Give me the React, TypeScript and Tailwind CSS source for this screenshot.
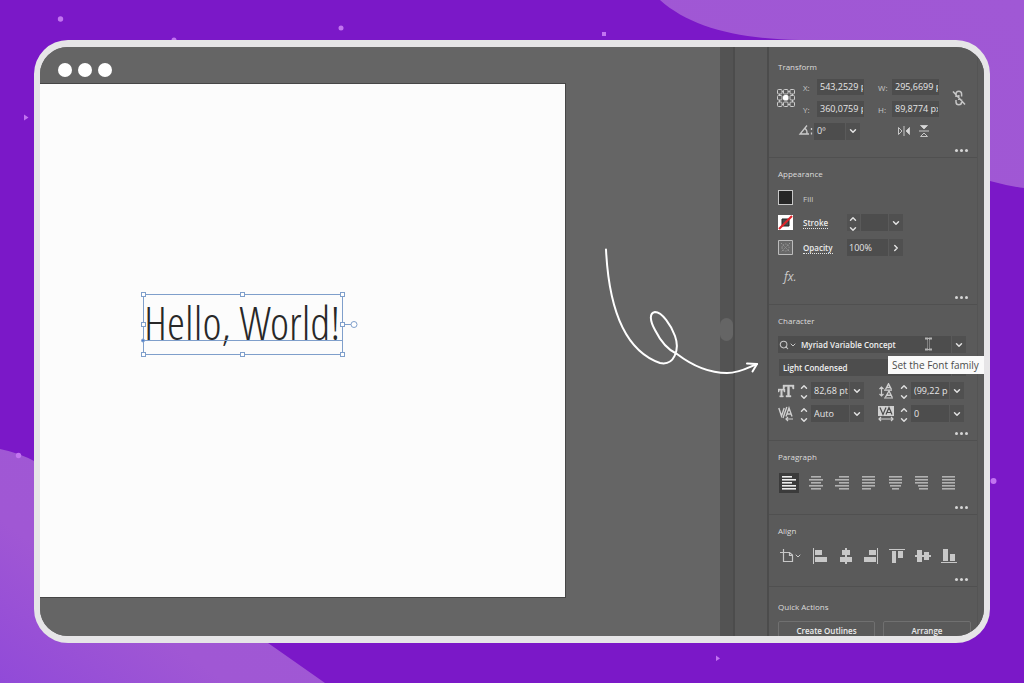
import type { ReactNode } from 'react';
import { ChevronDown, ChevronRight, ChevronUp, Search } from 'lucide-react';

function Section({ title, first, children }: { title: string; first?: boolean; children: ReactNode }) {
  return (
    <section className={`shrink-0 border-b border-[#505050] pb-[5px] pl-[9px] pr-[6px] ${first ? 'pt-[14px]' : 'pt-[10px]'}`}>
      <h2 className="text-[8px] font-medium leading-[12px] text-[#dcdcdc]">{title}</h2>
      {children}
    </section>
  );
}

function More({ label }: { label: string }) {
  return (
    <button type="button" aria-label={label} className="ml-auto mr-[3px] flex h-[4px] items-center gap-[2px]">
      <span className="size-[3px] rounded-full bg-[#d6d6d6]" />
      <span className="size-[3px] rounded-full bg-[#d6d6d6]" />
      <span className="size-[3px] rounded-full bg-[#d6d6d6]" />
    </button>
  );
}

function Field({ label, value, className }: { label: string; value: string; className: string }) {
  return (
    <input
      aria-label={label}
      defaultValue={value}
      className={`block h-[17px] min-w-0 bg-[#4d4d4d] text-[9px] font-medium leading-[16px] text-[#e6e6e6] outline-none ${className}`}
    />
  );
}

function Labelled({ name, id, value }: { name: string; id: string; value: string }) {
  return (
    <div className="flex h-[16px] items-center">
      <label htmlFor={id} className="w-[15px] pl-[1px] pt-[2px] text-[8px] font-medium leading-[12px] text-[#c6c6c6]">{name}</label>
      <input
        id={id}
        defaultValue={value}
        className="h-[16px] w-[47px] border-r border-[#4d4d4d] bg-[#4d4d4d] pl-[3px] text-[9px] font-medium leading-[16px] text-[#e6e6e6] outline-none"
      />
    </div>
  );
}

function Drop({ label, value, className, bold }: { label: string; value: string; className: string; bold?: boolean }) {
  return (
    <div className={`relative flex h-[17px] ${className}`}>
      <select
        aria-label={label}
        className={`w-full appearance-none bg-[#4d4d4d] pr-[16px] leading-[16px] outline-none ${bold ? 'pl-[4px] text-[8px] font-semibold text-[#f0f0f0]' : 'pl-[3px] text-[9px] font-medium text-[#e6e6e6]'}`}
      >
        <option>{value}</option>
      </select>
      <span className="pointer-events-none absolute inset-y-0 right-0 flex w-[15px] items-center justify-center border-l border-[#5a5a5a] bg-[#505050]">
        <ChevronDown size={10} strokeWidth={3.5} className="text-[#e2e2e2]" />
      </span>
    </div>
  );
}

function Stepper({ label }: { label: string }) {
  return (
    <div className="flex h-[17px] w-[11px] flex-col items-center justify-between">
      <button type="button" aria-label={`Increase ${label}`}><ChevronUp size={10} strokeWidth={3.5} className="block text-[#dedede]" /></button>
      <button type="button" aria-label={`Decrease ${label}`}><ChevronDown size={10} strokeWidth={3.5} className="block text-[#dedede]" /></button>
    </div>
  );
}

function CharCell({ icon, label, value }: { icon: ReactNode; label: string; value: string }) {
  return (
    <div className="flex items-center">
      {icon}
      <div className="ml-[3px] mr-[2px]"><Stepper label={label} /></div>
      <Drop label={label} value={value} className="w-[53px]" />
    </div>
  );
}

function LinkedLabel({ children }: { children: ReactNode }) {
  return (
    <div className="flex w-[54px] pl-[10px] pt-[2px]">
      <button type="button" className="border-b border-dotted border-[#e6e6e6] text-[8px] font-semibold leading-[10px] text-[#ececec]">{children}</button>
    </div>
  );
}

function ReferencePoint() {
  const spots = [0, 7, 14];
  return (
    <svg width="18" height="18" viewBox="0 0 18 18" fill="none" stroke="#cccccc" className="-ml-px mt-[10px] shrink-0">
      <path d="M2.500 2.500H15.500V15.500H2.500Z" />
      {spots.map((y) =>
        spots.map((x) => (
          <rect key={`${x}-${y}`} x={x === 0 ? 0.5 : x === 7 ? 6.5 : 13} y={y === 0 ? 0.5 : y === 7 ? 6.5 : 13} width="4.500" height="4.500" rx="1" fill={x === 7 && y === 7 ? '#fff' : '#5a5a5a'} stroke={x === 7 && y === 7 ? '#fff' : '#cccccc'} />
        )),
      )}
    </svg>
  );
}

const paragraphIcons: { label: string; lines: [number, number][] }[] = [
  { label: 'Align left', lines: [[0, 10], [0, 14], [0, 10], [0, 14], [0, 14]] },
  { label: 'Align center', lines: [[2, 10], [0, 14], [2, 10], [0, 14], [2, 10]] },
  { label: 'Align right', lines: [[4, 10], [0, 14], [4, 10], [0, 14], [4, 10]] },
  { label: 'Justify with last line left', lines: [[0, 13], [0, 13], [0, 13], [0, 13], [0, 9]] },
  { label: 'Justify with last line centered', lines: [[0, 13], [0, 13], [0, 13], [1, 11], [3, 7]] },
  { label: 'Justify with last line right', lines: [[0, 13], [0, 13], [0, 13], [3, 10], [4, 9]] },
  { label: 'Justify all lines', lines: [[0, 13], [0, 13], [0, 13], [0, 13], [0, 13]] },
];

const alignIcons: { label: string; d: string }[] = [
  { label: 'Align left edges', d: 'M1 0H2V16H1ZM3 2H10V7H3ZM3 9H15V14H3Z' },
  { label: 'Align horizontal centers', d: 'M7 0H9V2H12V7H9V9H14V14H9V16H7V14H2V9H7V7H4V2H7Z' },
  { label: 'Align right edges', d: 'M14 0H15V16H14ZM6 2H13V7H6ZM1 9H13V14H1Z' },
  { label: 'Align top edges', d: 'M0 1H16V2H0ZM3 3H7V15H3ZM9 3H14V10H9Z' },
  { label: 'Align vertical centers', d: 'M0 7H2V2H7V7H9V4H14V7H16V9H14V12H9V9H7V14H2V9H0Z' },
  { label: 'Align bottom edges', d: 'M0 14H16V15H0ZM2 1H7V13H2ZM9 6H14V13H9Z' },
];

function PropertiesPanel() {
  return (
    <aside className="flex w-[215px] shrink-0 overflow-hidden bg-[#5a5a5a]">
      <div className="flex min-w-0 flex-1 flex-col">
        <Section title="Transform" first>
          <div className="mt-[6px] flex">
            <ReferencePoint />
            <div className="ml-[7px] flex flex-col gap-[6px]">
              <Labelled name="X:" id="pos-x" value="543,2529 px" />
              <Labelled name="Y:" id="pos-y" value="360,0759 px" />
            </div>
            <div className="ml-[13px] flex flex-col gap-[6px]">
              <Labelled name="W:" id="size-w" value="295,6699 px" />
              <Labelled name="H:" id="size-h" value="89,8774 px" />
            </div>
            <button type="button" aria-label="Constrain proportions" className="ml-auto mr-[4px] self-center">
              <svg width="16" height="16" viewBox="0 0 16 16" fill="none" stroke="#c6c6c6" strokeWidth="1.500">
                <path d="M5 7V4a2.800 2.800 0 0 1 5.600 0V6.500M5 10v2a2.800 2.800 0 0 0 5.600 0V9.500M7.800 5v5M2 1.500L14 14.500" />
              </svg>
            </button>
          </div>
          <div className="mt-[6px] flex h-[16px] items-center pl-[20px]">
            <svg width="16" height="12" viewBox="0 0 16 12" fill="none" stroke="#cacaca" strokeWidth="1.300" aria-hidden="true">
              <path d="M11 9H2L9 .5M7 3.500c1.500 1 2.300 3 2 5.500" />
              <path d="M13.500 3v2M13.500 7.500v2" />
            </svg>
            <Drop label="Rotate" value="0º" className="w-[46px]" />
            <button type="button" aria-label="Flip horizontally" className="ml-[37px]">
              <svg width="14" height="12" viewBox="0 0 14 12" stroke="#c6c6c6">
                <path d="M1.500 2.500L5 6L1.500 9.500Z" fill="none" />
                <path d="M7 1V11" strokeWidth="1" />
                <path d="M12.500 2.500L9 6L12.500 9.500Z" fill="#d8d8d8" />
              </svg>
            </button>
            <button type="button" aria-label="Flip vertically" className="ml-[7px]">
              <svg width="12" height="14" viewBox="0 0 12 14" stroke="#c6c6c6">
                <path d="M2.500 1.500H9.500L6 5Z" fill="#d8d8d8" />
                <path d="M1 7H11" />
                <path d="M2.500 12.500H9.500L6 9Z" fill="none" />
              </svg>
            </button>
          </div>
          <div className="mt-[9px] flex"><More label="More transform options" /></div>
        </Section>

        <Section title="Appearance">
          <div className="mt-[5px] flex h-[25px] items-center">
            <button type="button" aria-label="Fill color" className="size-[15px] border border-[#c8c8c8] bg-[#262626]" />
            <span className="ml-[10px] pt-[2px] text-[8px] font-medium leading-[12px] text-[#cacaca]">Fill</span>
          </div>
          <div className="flex h-[25px] items-center">
            <button type="button" aria-label="Stroke color">
              <svg width="15" height="15" viewBox="0 0 15 15" className="block">
                <path d="M0 0H15V15H0Z" fill="#fff" />
                <path d="M4 4H11V11H4Z" fill="#4a4a4a" stroke="#222" />
                <path d="M1 14L14 1" stroke="#e0252b" strokeWidth="2.200" />
              </svg>
            </button>
            <LinkedLabel>Stroke</LinkedLabel>
            <div className="flex bg-[#525252] pr-[2px]"><Stepper label="stroke weight" /></div>
            <Drop label="Stroke weight" value="" className="ml-[1px] w-[42px]" />
          </div>
          <div className="flex h-[25px] items-center">
            <svg width="15" height="15" viewBox="0 0 15 15" fill="none" stroke="#969696" aria-hidden="true">
              <path d="M.5 .5H14.500V14.500H.5Z" fill="#686868" stroke="#bcbcbc" />
              <path d="M3 3L12 12M12 3L3 12M4 7.500a3.500 3.500 0 1 0 7 0a3.500 3.500 0 1 0-7 0" strokeDasharray="1.500 1" />
            </svg>
            <LinkedLabel>Opacity</LinkedLabel>
            <Field label="Opacity value" value="100%" className="w-[41px] pl-[2px]" />
            <button type="button" aria-label="Opacity slider" className="flex h-[17px] w-[15px] items-center justify-center border-l border-[#5a5a5a] bg-[#505050]">
              <ChevronRight size={10} strokeWidth={3.5} className="text-[#e2e2e2]" />
            </button>
          </div>
          <div className="mt-[4px] flex h-[25px] items-center pl-[6px]">
            <button type="button" aria-label="Effects" className="text-[12px] italic leading-[16px] text-[#cccccc]">fx.</button>
          </div>
          <div className="mt-[6px] flex"><More label="More appearance options" /></div>
        </Section>

        <Section title="Character">
          <div className="relative mt-[9px] flex h-[17px] items-center">
            <span className="flex h-[17px] w-[19px] items-center bg-[#4d4d4d] pl-[1px] text-[#c8c8c8]">
              <Search size={10} strokeWidth={2.500} className="shrink-0" />
              <ChevronDown size={8} strokeWidth={3} className="shrink-0" />
            </span>
            <Drop label="Font family" value="Myriad Variable Concept" bold className="mr-[5px] flex-1" />
            <svg width="9" height="14" viewBox="0 0 9 14" fill="none" stroke="#b4b4b4" aria-hidden="true" className="absolute right-[38px] top-[1px]">
              <path d="M1 1.500H3.500L4.500 2.500L5.500 1.500H8M1 12.500H3.500L4.500 11.500L5.500 12.500H8M4.500 2.500V11.500" strokeWidth="2" />
              <path d="M4.500 2V12" stroke="#333" strokeWidth=".8" />
            </svg>
          </div>
          <div className="relative mt-[6px]">
            <Drop label="Font style" value="Light Condensed" bold className="ml-[1px] mr-[5px]" />
            <div role="tooltip" className="absolute -right-[13px] -top-[3px] z-10 h-[18px] w-[96px] whitespace-nowrap bg-[#fafafa] pl-[4px] text-[10px] font-medium leading-[18px] text-[#4c4c4c]">
              Set the Font family
            </div>
          </div>
          <div className="mt-[6px] grid grid-cols-[100px_auto] gap-y-[6px]">
            <CharCell
              label="Font size"
              value="82,68 pt"
              icon={
                <svg width="17" height="16" viewBox="0 0 17 16" fill="#cfcfcf" stroke="#cfcfcf" strokeWidth=".4" aria-hidden="true">
                  <path d="M5 2H16V6H14.800L14 3.500H11.500V12.500H13V14H8V12.500H9.500V3.500H7L6.200 6H5ZM0 6H7V9H6L5.500 7.300H4.300V12.700H5.300V14H1.700V12.700H2.700V7.300H1.500L1 9H0Z" />
                </svg>
              }
            />
            <CharCell
              label="Leading"
              value="(99,22 p"
              icon={
                <svg width="17" height="16" viewBox="0 0 17 16" fill="none" stroke="#cfcfcf" aria-hidden="true">
                  <path d="M3.500 4V13M1.500 6L3.500 4L5.500 6M1.500 11L3.500 13L5.500 11M6 7.200H14M6 15H15" strokeWidth="1.200" />
                  <path d="M7.500 6.500L10.500 .8L13.500 6.500M9 4.500H12M7.300 14.500L11 8L14.300 14.500M9 12.300H13" strokeWidth="1.400" />
                </svg>
              }
            />
            <CharCell
              label="Kerning"
              value="Auto"
              icon={
                <svg width="17" height="16" viewBox="0 0 17 16" fill="none" stroke="#cfcfcf" aria-hidden="true">
                  <path d="M.8 2L3.500 10L6.200 2M8 10.500L11 2L14 10.500M9 8H13M8.800 1L5 12" strokeWidth="1.400" />
                  <path d="M15 13H8M10 11L8 13L10 15" strokeWidth="1.200" />
                </svg>
              }
            />
            <CharCell
              label="Tracking"
              value="0"
              icon={
                <svg width="17" height="16" viewBox="0 0 17 16" fill="none" aria-hidden="true">
                  <path d="M0 0H16V10H0Z" fill="#d0d0d0" />
                  <path d="M2 1.500L5 8.500L8 1.500M8 8.500L11 1.500L14 8.500M9 6.500H13" stroke="#4a4a4a" strokeWidth="1.200" />
                  <path d="M1 13H15M3 11L1 13L3 15M13 11L15 13L13 15" stroke="#cfcfcf" strokeWidth="1.200" />
                </svg>
              }
            />
          </div>
          <div className="mt-[9px] flex"><More label="More character options" /></div>
        </Section>

        <Section title="Paragraph">
          <div className="mr-[12px] mt-[10px] flex justify-between pl-[1px]">
            {paragraphIcons.map((icon, i) => (
              <button
                key={icon.label}
                type="button"
                aria-label={icon.label}
                className={`flex size-[20px] items-center justify-center ${i === 0 ? 'bg-[#3b3b3b] text-[#ededed]' : 'text-[#b2b2b2]'}`}
              >
                <svg width="14" height="14" viewBox="0 0 14 14" fill="currentColor">
                  {icon.lines.map(([x, w], row) => (
                    <rect key={row} x={x} y={row * 3} width={w} height={1.6} />
                  ))}
                </svg>
              </button>
            ))}
          </div>
          <div className="mt-[12px] flex"><More label="More paragraph options" /></div>
        </Section>

        <Section title="Align">
          <div className="mr-[14px] mt-[9px] flex h-[20px] items-center justify-between pl-[2px]">
            <button type="button" aria-label="Align to" className="flex items-center text-[#c8c8c8]">
              <svg width="14" height="14" viewBox="0 0 14 14" fill="none" stroke="currentColor">
                <path d="M3.500 0V12.500H12.500V6L9.500 3.500H0M9.500 3.500V6.500H12.500" strokeWidth="1.200" />
              </svg>
              <ChevronDown size={8} strokeWidth={3} />
            </button>
            {alignIcons.map((icon) => (
              <button key={icon.label} type="button" aria-label={icon.label} className="text-[#c8c8c8]">
                <svg width="16" height="16" viewBox="0 0 16 16" fill="currentColor"><path d={icon.d} /></svg>
              </button>
            ))}
          </div>
          <div className="mt-[11px] flex"><More label="More align options" /></div>
        </Section>

        <section className="shrink-0 pl-[9px] pr-[6px] pt-[14px]">
          <h2 className="text-[8px] font-medium leading-[12px] text-[#dcdcdc]">Quick Actions</h2>
          <div className="mt-[8px] grid grid-cols-[97px_auto] gap-[8px]">
            <button type="button" className="h-[20px] rounded-[2px] border border-[#707070] text-[8px] font-semibold leading-[18px] text-[#ececec]">Create Outlines</button>
            <button type="button" className="h-[20px] rounded-[2px] border border-[#707070] text-[8px] font-semibold leading-[18px] text-[#ececec]">Arrange</button>
          </div>
        </section>
      </div>
      <div className="w-[7px] shrink-0 border-l border-[#545454]" />
    </aside>
  );
}

const handles = [[4, 4], [103, 4], [203, 4], [4, 34], [203, 34], [4, 64], [103, 64], [203, 64]];

function SelectedText() {
  return (
    <div className="absolute left-[99px] top-[206px]">
      <p className="whitespace-nowrap pl-[5px] font-['Noto_Sans_ExtraCondensed_Light','Noto_Sans_ExtraCondensed','Open_Sans_Condensed_Light','Open_Sans_Condensed','Roboto_Condensed','Liberation_Sans_Narrow',sans-serif] text-[46px] font-light leading-[64px] text-[#282828]">
        Hello, World!
      </p>
      <svg width="220" height="70" viewBox="0 0 220 70" fill="#fff" stroke="#7f9fcb" className="absolute left-0 top-0">
        <path d="M4.500 4.500H203.500V64.500H4.500ZM4 50.500H203M205 34.500H213" fill="none" />
        {handles.map(([x, y]) => <rect key={`${x}-${y}`} x={x - 1.5} y={y - 1.5} width="4" height="4" />)}
        <circle cx="215" cy="34.500" r="3" />
        <circle cx="4" cy="50.500" r="1.500" fill="#4d7fd0" />
      </svg>
    </div>
  );
}

function Backdrop() {
  return (
    <svg viewBox="0 0 1024 683" preserveAspectRatio="xMidYMid slice" className="absolute inset-0 size-full" aria-hidden="true">
      <defs>
        <linearGradient id="blob" x1="0" y1="1" x2="1" y2="0">
          <stop offset="0" stopColor="#914ad8" />
          <stop offset=".35" stopColor="#a057d4" />
          <stop offset="1" stopColor="#a058d5" />
        </linearGradient>
      </defs>
      <path d="M660 0C690 27 738 39 800 40C870 43 925 160 990 181Q1008 186 1024 188V0Z" fill="url(#blob)" />
      <path d="M0 449Q20 453 36 462C110 500 150 600 268 643Q298 664 325 683H0Z" fill="url(#blob)" />
      <g fill="#c274f0">
        <circle cx="60.500" cy="19" r="2.700" />
        <circle cx="174" cy="40" r="2.500" />
        <circle cx="341" cy="28" r="2.500" />
        <path d="M602 32H606V36H602Z" />
        <circle cx="18.500" cy="455.500" r="2.700" />
        <circle cx="993.500" cy="481" r="3" />
        <path d="M24 114.500L28.500 117.500L24 120.500ZM716 655.500L720 658.500L716 661Z" />
      </g>
    </svg>
  );
}

export default function App() {
  return (
    <main className="relative flex h-screen overflow-hidden bg-[#7b18c8] px-[34px] py-[40px] font-['Open_Sans',sans-serif]">
      <Backdrop />
      <div className="relative flex min-w-0 flex-1 overflow-hidden rounded-[34px] border-x-[6px] border-y-[7px] border-[#e6e5e7] bg-[#656565]">
        <div className="flex min-w-0 flex-1 flex-col bg-[#656565]">
          <header className="flex h-[36px] shrink-0 items-center gap-[6px] pl-[18px] pt-[10px]">
            <span className="size-[14px] rounded-full bg-white" />
            <span className="size-[14px] rounded-full bg-white" />
            <span className="size-[14px] rounded-full bg-white" />
          </header>
          <div className="relative mb-[38px] mr-[154px] flex-1 border-y border-r border-[#464646] bg-[#fcfcfc]">
            <SelectedText />
          </div>
        </div>
        <div className="flex w-[15px] shrink-0 flex-col justify-center border-r-2 border-[#4c4c4c] bg-[#535353]">
          <div className="mb-[24px] h-[23px] rounded-full bg-[#656565]" />
        </div>
        <div className="w-[34px] shrink-0 border-r-2 border-[#4c4c4c] bg-[#5a5a5a]" />
        <PropertiesPanel />
        <svg width="170" height="140" viewBox="600 240 170 140" fill="none" stroke="#fff" strokeWidth="2" strokeLinecap="round" strokeLinejoin="round" className="pointer-events-none absolute right-[214px] top-[193px]" aria-hidden="true">
          <path d="M606 249.500C608 290 617 348 660 363C674 366 680 350 675 336C671 325 662 312 655 312C649 313 650 321 655 330C661 342 668 350 677 354C694 367 710 373 727 373C740 373 749 367 757 364" />
          <path d="M747 363.500L757 364L752.500 371.500" />
        </svg>
      </div>
    </main>
  );
}
